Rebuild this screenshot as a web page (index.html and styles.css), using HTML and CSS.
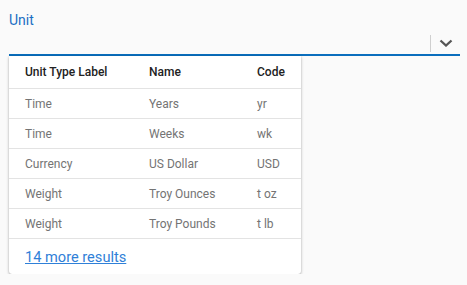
FILE: index.html
```html
<!DOCTYPE html>
<html>
<head>
<meta charset="utf-8">
<link rel="stylesheet" href="styles.css">
</head>
<body>
<div class="field">
  <div class="label">Unit</div>
  <div class="control">
    <span class="sep"></span>
    <svg class="chev" width="14" height="8" viewBox="0 0 14 8"><path d="M1.5 1.5 L7 6.5 L12.5 1.5" fill="none" stroke="#555" stroke-width="2.3"/></svg>
  </div>
</div>
<div class="panel">
  <table class="grid">
    <thead>
      <tr><th class="c1">Unit Type Label</th><th class="c2">Name</th><th class="c3">Code</th></tr>
    </thead>
    <tbody>
      <tr><td>Time</td><td>Years</td><td>yr</td></tr>
      <tr><td>Time</td><td>Weeks</td><td>wk</td></tr>
      <tr><td>Currency</td><td>US Dollar</td><td>USD</td></tr>
      <tr><td>Weight</td><td>Troy Ounces</td><td>t oz</td></tr>
      <tr><td>Weight</td><td>Troy Pounds</td><td>t lb</td></tr>
    </tbody>
  </table>
  <div class="footer"><a href="#" class="more">14 more results</a></div>
</div>
</body>
</html>
```
FILE: styles.css
```css
html, body {
  margin: 0;
  padding: 0;
  background: #fafafa;
  font-family: Roboto, "Liberation Sans", sans-serif;
}
body {
  padding: 10px 7px 0 9px;
}
.field {
  width: 451px;
}
.label {
  font-size: 14px;
  line-height: 20px;
  color: #1a6fc4;
}
.control {
  height: 24px;
  border-bottom: 2px solid #0a6ebd;
  display: flex;
  align-items: center;
  justify-content: flex-end;
}
.sep {
  width: 1px;
  height: 17px;
  background: #cfcfcf;
  margin-top: 2px;
  margin-right: 8px;
}
.chev {
  display: block;
  margin-right: 7px;
  margin-top: 1px;
}
.panel {
  width: 292px;
  background: #fff;
  border-radius: 0 0 3px 3px;
  box-shadow: 0 1px 3px rgba(0,0,0,0.32), 0 0 1px rgba(0,0,0,0.14);
}
.grid {
  width: 100%;
  border-collapse: collapse;
  table-layout: fixed;
  font-size: 12px;
}
.grid th, .grid td {
  text-align: left;
  padding: 0 0 0 16px;
  border-bottom: 1px solid #e3e3e3;
  white-space: nowrap;
}
.grid th {
  height: 32px;
  font-weight: 500;
  color: #222;
}
.grid td {
  height: 29px;
  color: #747474;
}
.c1 { width: 108px; }
.c2 { width: 92px; }
.c3 { width: 44px; }
.footer {
  height: 35px;
  display: flex;
  align-items: center;
  padding-left: 16px;
}
.more {
  font-size: 14.6px;
  color: #2f80d8;
  text-decoration: underline;
}
```
